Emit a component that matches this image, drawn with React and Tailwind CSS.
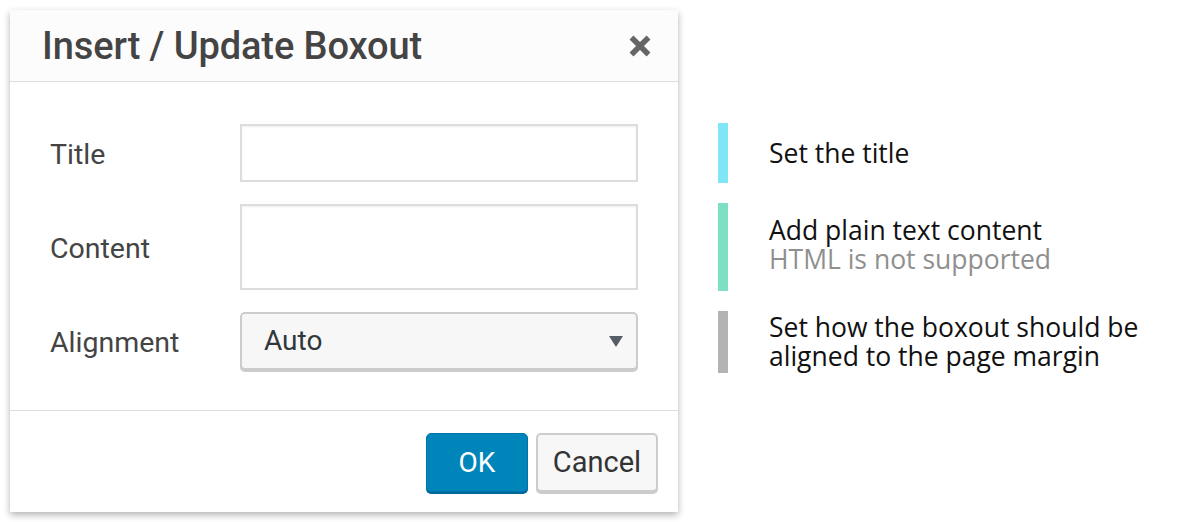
import React from "react";

export default function App() {
  const sans = { fontFamily: "Roboto, 'Liberation Sans', sans-serif" };
  const open = { fontFamily: "'Open Sans', 'Liberation Sans', sans-serif" };
  return (
    <div className="flex items-start w-[1200px] h-[522px] bg-white p-[10px] overflow-hidden">
      <div
        className="w-[668px] h-[502px] bg-white shadow-[0_3px_7px_rgba(0,0,0,0.3)] flex flex-col"
        style={sans}
      >
        <div className="h-[72px] bg-[#fcfcfc] border-b border-[#dddddd] flex items-center justify-between pl-[32px] pr-[26px]">
          <div className="text-[38px] font-medium text-[#444444] leading-none tracking-[-0.1px]">
            Insert / Update Boxout
          </div>
          <svg width="24" height="24" viewBox="0 0 24 24">
            <path d="M3.5 3.5 L20.5 20.5 M20.5 3.5 L3.5 20.5" stroke="#666666" strokeWidth="5.5" strokeLinecap="butt" />
          </svg>
        </div>
        <div className="flex flex-col gap-[22px] pt-[42px] pb-[38px] px-[40px] border-b border-[#dddddd]">
          <div className="flex items-center h-[58px]">
            <div className="w-[190px] pt-[5px] text-[28.5px] leading-none text-[#444444]">Title</div>
            <div className="flex-1 h-full border-2 border-[#dddddd] bg-white shadow-[inset_0_1px_2px_rgba(0,0,0,0.07)]" />
          </div>
          <div className="flex items-center h-[86px]">
            <div className="w-[190px] pt-[5px] text-[28.5px] leading-none text-[#444444]">Content</div>
            <div className="flex-1 h-full border-2 border-[#dddddd] bg-white shadow-[inset_0_1px_2px_rgba(0,0,0,0.07)]" />
          </div>
          <div className="flex items-center h-[60px]">
            <div className="w-[190px] pt-[3px] text-[28.5px] leading-none text-[#444444]">Alignment</div>
            <div className="flex-1 h-[58px] self-start border-2 border-[#cccccc] bg-[#f7f7f7] rounded-[5px] shadow-[0_2px_0_#cccccc] flex items-center justify-between pl-[22px] pr-[12px]">
              <span className="text-[28px] leading-none text-[#32373c]">Auto</span>
              <svg width="16" height="12" viewBox="0 0 16 12">
                <path d="M1 1 L15 1 L8 12 Z" fill="#555d66" />
              </svg>
            </div>
          </div>
        </div>
        <div className="flex-1 flex items-start justify-end gap-[8px] pt-[22px] pr-[20px]">
          <div className="w-[102px] h-[59px] rounded-[5px] bg-[#0085ba] border border-[#0073aa] shadow-[0_2px_0_#006799] flex items-center justify-center text-white text-[28px] leading-none">
            OK
          </div>
          <div className="w-[122px] h-[59px] rounded-[5px] bg-[#f7f7f7] border-2 border-[#cccccc] shadow-[0_2px_0_#cccccc] flex items-center justify-center text-[#333333] text-[29px] leading-none">
            Cancel
          </div>
        </div>
      </div>
      <div className="ml-[40px] pt-[113px] flex flex-col gap-[20px]" style={open}>
        <div className="flex items-center h-[60px]">
          <div className="w-[10px] h-full bg-[#80e5f7]" />
          <div className="ml-[41px] text-[26.5px] leading-[29px] text-[#111111]">Set the title</div>
        </div>
        <div className="flex items-center h-[88px]">
          <div className="w-[10px] h-full bg-[#7ddfc3]" />
          <div className="ml-[41px] -mt-[5px] text-[26.5px] leading-[29px]">
            <div className="text-[#111111]">Add plain text content</div>
            <div className="text-[#8f8f8f]">HTML is not supported</div>
          </div>
        </div>
        <div className="flex items-center h-[62px]">
          <div className="w-[10px] h-full bg-[#b3b3b3]" />
          <div className="ml-[41px] text-[26.5px] leading-[29px] text-[#111111]">
            Set how the boxout should be
            <br />
            aligned to the page margin
          </div>
        </div>
      </div>
    </div>
  );
}
